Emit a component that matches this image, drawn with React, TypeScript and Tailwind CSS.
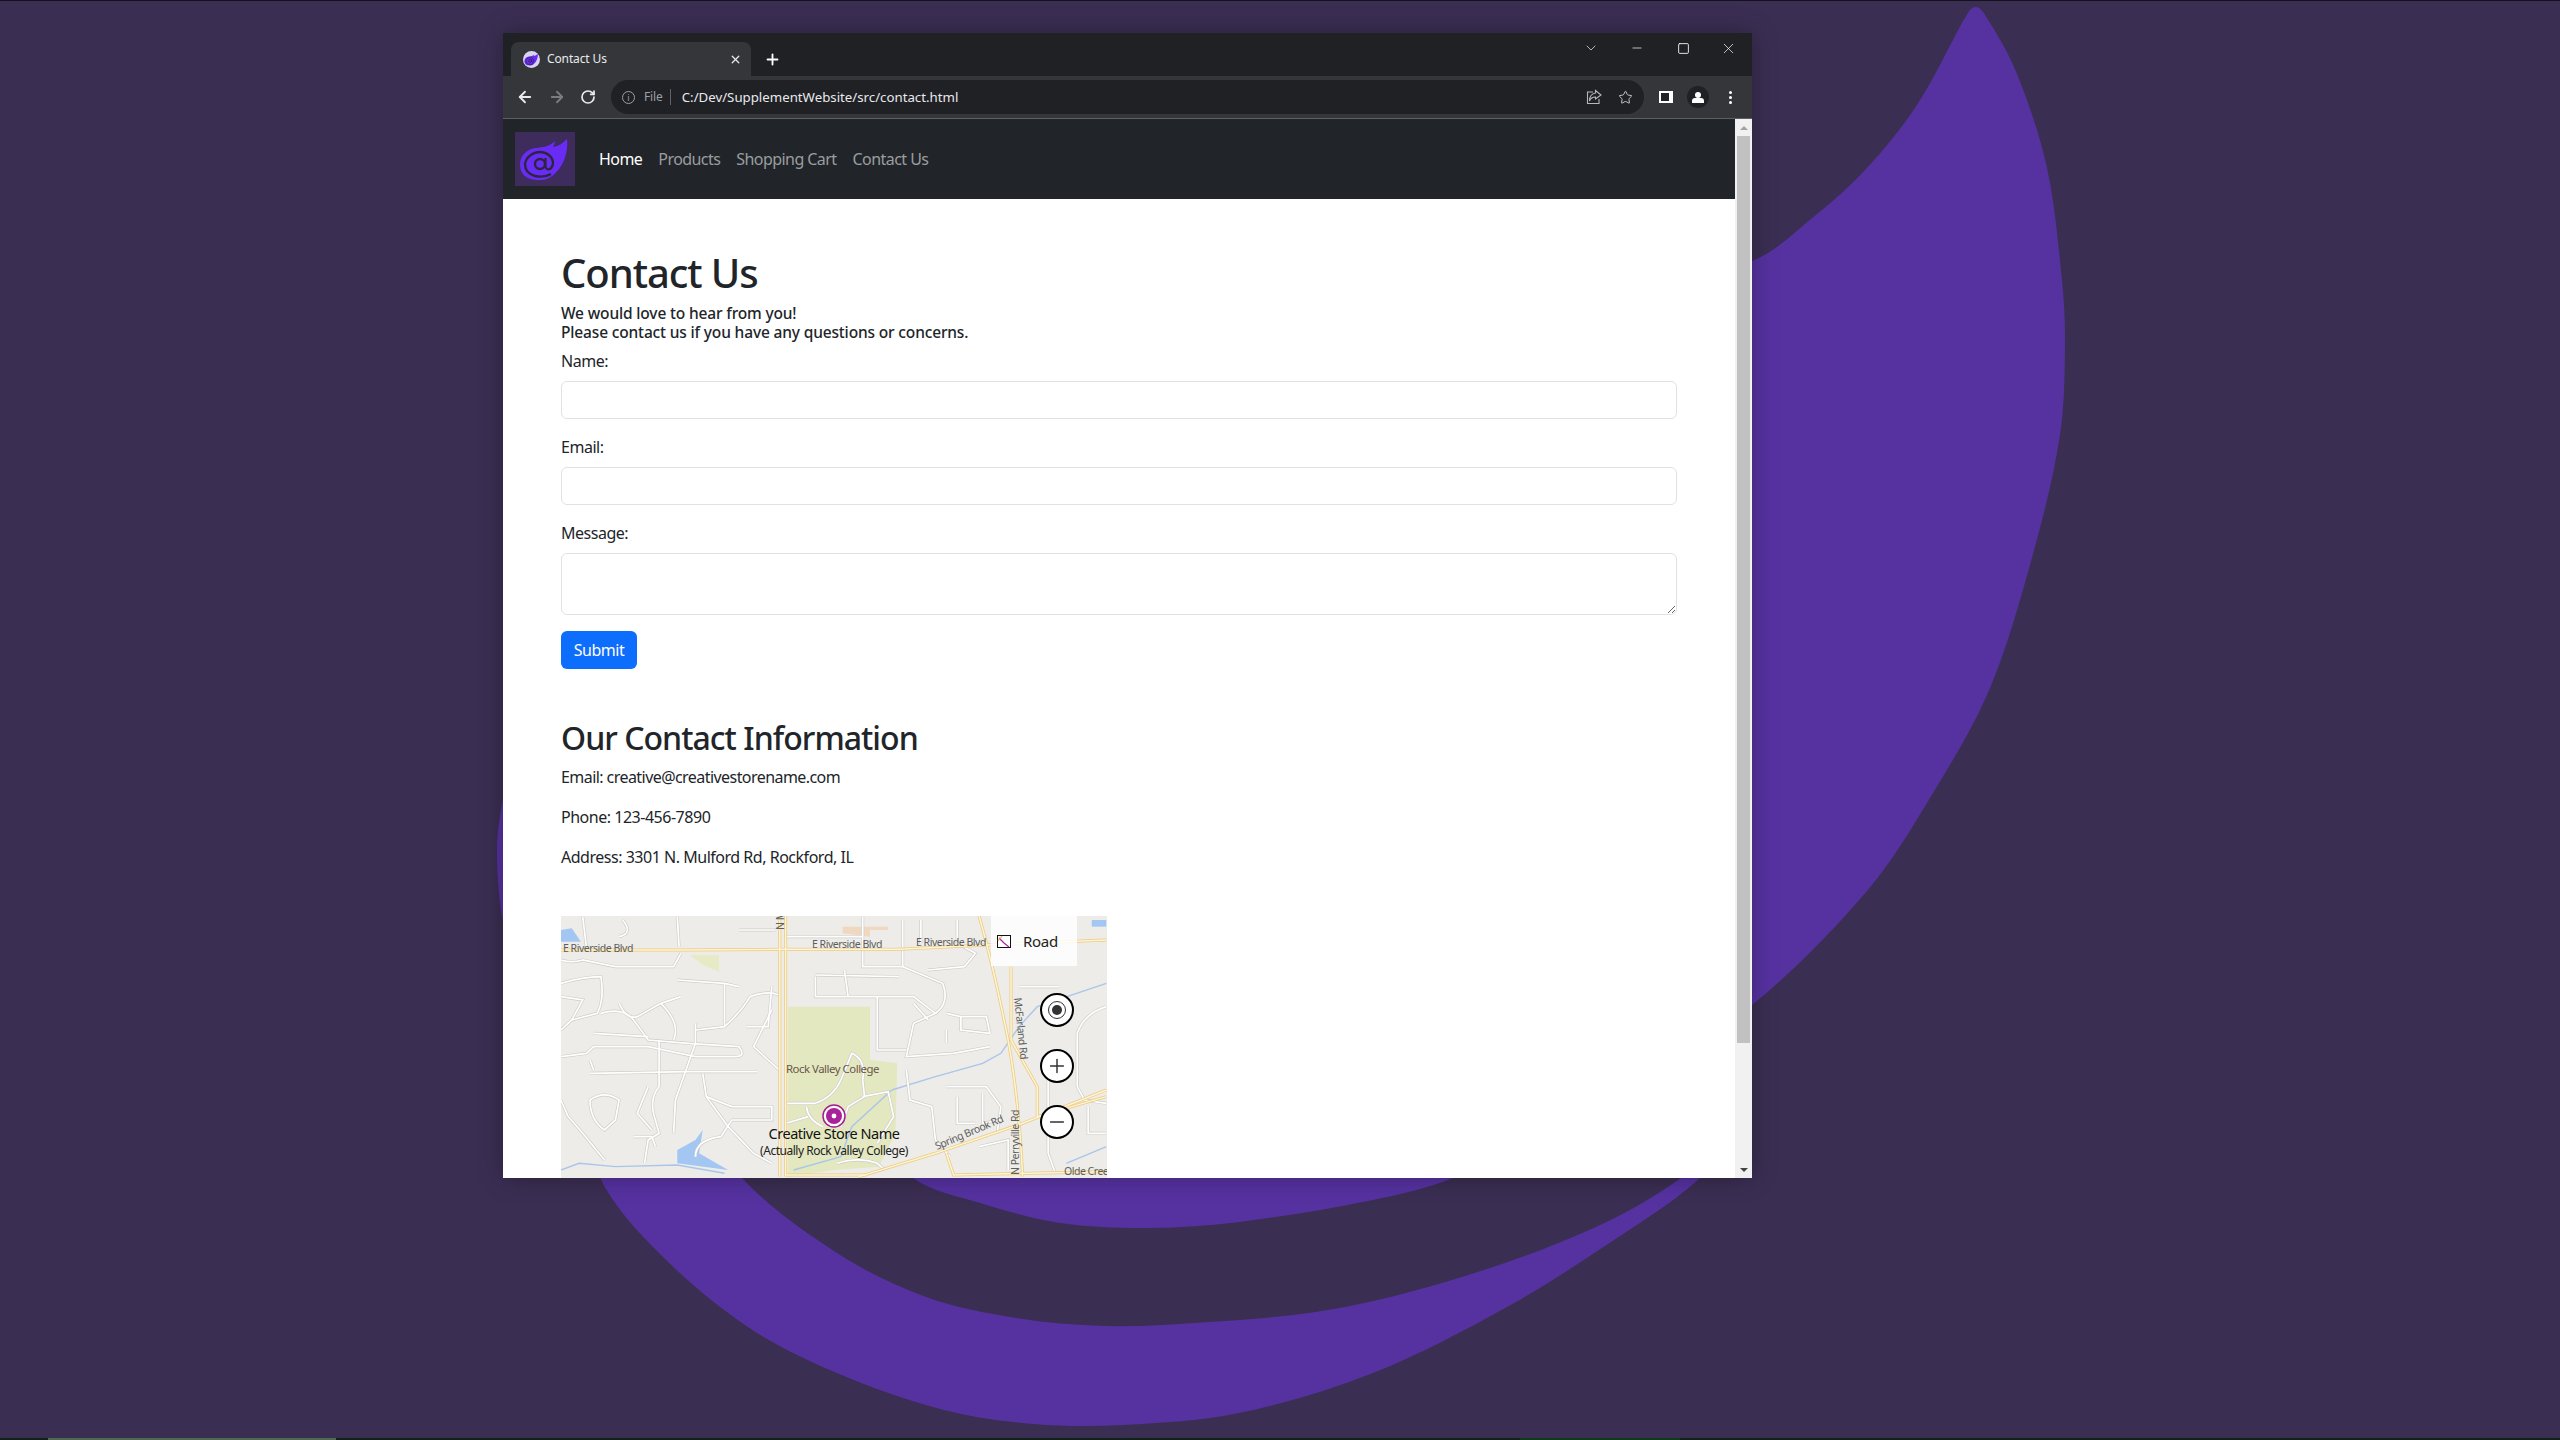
import React from 'react';
import { ArrowLeft, ArrowRight, ChevronDown, Minus, Plus, RotateCw, Square, Star, X } from 'lucide-react';

type Pt = [number, number];

// smooth curve through traced points, handles sized by segment so uneven spacing doesn't kink
const smooth = (pts: Pt[]) => {
  const unit = (a: Pt, b: Pt): Pt => {
    const len = Math.hypot(b[0] - a[0], b[1] - a[1]) || 1;
    return [(b[0] - a[0]) / len, (b[1] - a[1]) / len];
  };
  let d = `M${pts[0][0]} ${pts[0][1]}`;
  for (let i = 0; i < pts.length - 1; i++) {
    const p0 = pts[Math.max(i - 1, 0)];
    const p1 = pts[i];
    const p2 = pts[i + 1];
    const p3 = pts[Math.min(i + 2, pts.length - 1)];
    const t1 = unit(p0, p2);
    const t2 = unit(p1, p3);
    const h = Math.hypot(p2[0] - p1[0], p2[1] - p1[1]) / 3;
    d += `C${p1[0] + t1[0] * h} ${p1[1] + t1[1] * h} ${p2[0] - t2[0] * h} ${p2[1] - t2[1] * h} ${p2[0]} ${p2[1]}`;
  }
  return d;
};

const blob: Pt[] = [
  [1963, 21], [1975, 7], [1987, 18], [2017, 74], [2047, 168], [2062, 281], [2065, 344], [2060, 435],
  [2033, 554], [1990, 688], [1933, 793], [1867, 891], [1752, 1005], [1600, 1110], [1453, 1178],
  [1373, 1200], [1239, 1222], [1150, 1228], [1060, 1223], [980, 1203], [913, 1178], [850, 1110],
  [900, 600], [1400, 380], [1752, 261], [1817, 214], [1867, 168], [1917, 105], [1963, 21],
];

const crescent: Pt[] = [
  [510, 760], [497, 850], [510, 950], [600, 1178], [659, 1253], [748, 1327], [837, 1373], [944, 1410],
  [1034, 1424], [1123, 1425], [1239, 1413], [1373, 1373], [1507, 1307], [1614, 1240], [1700, 1178],
  [1745, 1120], [1681, 1178], [1596, 1227], [1462, 1277], [1328, 1310], [1194, 1323], [1105, 1326],
  [1016, 1318], [926, 1297], [837, 1253], [742, 1178], [600, 1000], [520, 850], [510, 760],
];

const Backdrop = () => (
  <svg className="absolute inset-0 h-full w-full" viewBox="0 0 2560 1440">
    <path d={smooth(blob)} fill="#5632a1" />
    <path d={smooth(crescent)} fill="#5632a1" />
  </svg>
);

const Logo = ({ className }: { className: string }) => (
  <svg className={className} viewBox="0 0 60 54">
    <path
      d="M5 33C5 23 12 17 21 16C28 15 34 15 40 9C40 11 39 13 38 15C44 14 48 11 52 7C53 16 51 26 46 34C41 42 34 48 26 48C13 49 5 43 5 33Z"
      fill="#6a2cf5"
    />
    <path d="M36 42C31 45 25 45 20 44C13 42 10 37 10 32C11 25 18 20 25 20C32 20 38 25 38 31C38 35 35 38 33 37" fill="none" stroke="#2c2540" strokeWidth="2.4" />
    <circle cx="25" cy="32" r="5" fill="none" stroke="#2c2540" strokeWidth="2.4" />
    <path d="M30.5 26V34C30.5 37 33 37.5 33.5 37" fill="none" stroke="#2c2540" strokeWidth="2.2" />
  </svg>
);

const TitleBar = () => (
  <div className="flex h-[43px] shrink-0 items-end bg-[#202124] pl-2">
    <div className="flex h-[34px] w-[240px] items-center rounded-t-lg bg-[#35363a] pl-3 pr-[9px]">
      <Logo className="h-[17px] w-[17px] rounded-full bg-[#d9d4f0]" />
      <span className="ml-[7px] flex-1 text-[12px] tracking-[-0.01em] text-[#e8eaed]">Contact Us</span>
      <X size={13} strokeWidth={2.4} className="text-[#e8eaed]" />
    </div>
    <div className="ml-[13px] flex h-[34px] items-center">
      <Plus size={17} strokeWidth={2.6} className="text-white" />
    </div>
    <div className="ml-auto flex h-[43px] items-start pt-[6px]">
      <div className="flex h-[18px] w-[46px] items-center justify-center">
        <ChevronDown size={16} strokeWidth={1} className="text-white" />
      </div>
      <div className="flex h-[18px] w-[46px] items-center justify-center">
        <Minus size={14} strokeWidth={1.2} className="text-white" />
      </div>
      <div className="flex h-[18px] w-[46px] items-center justify-center">
        <Square size={13} strokeWidth={1.6} className="text-white" />
      </div>
      <div className="flex h-[18px] w-[46px] items-center justify-center pr-[1px]">
        <X size={17} strokeWidth={1} className="text-white" />
      </div>
    </div>
  </div>
);

const Toolbar = () => (
  <div className="flex h-[43px] shrink-0 items-center border-b border-[#5f6063] bg-[#35363a]">
    <div className="ml-[13px] flex w-[95px] items-center gap-[14px] text-[#e8eaed]">
      <ArrowLeft size={18} strokeWidth={2.4} />
      <ArrowRight size={18} strokeWidth={2.4} className="text-[#7b7c7f]" />
      <RotateCw size={16} strokeWidth={2.6} />
    </div>
    <div className="flex h-[34px] w-[1033px] items-center rounded-full bg-[#202124] pl-[11px] pr-[10px]">
      <span className="flex h-[13px] w-[13px] items-center justify-center rounded-full border border-[#9aa0a6] text-[9px] leading-none text-[#9aa0a6]">
        i
      </span>
      <span className="ml-[9px] text-[12px] tracking-[-0.01em] text-[#9aa0a6]">File</span>
      <span className="ml-[7px] h-[16px] w-px bg-[#5f6368]" />
      <span className="ml-[11px] flex-1 pt-px text-[13.25px] text-[#e8eaed]">C:/Dev/SupplementWebsite/src/contact.html</span>
      <svg className="h-[16px] w-[16px] text-[#b5b7b9]" viewBox="0 0 16 16" fill="none" stroke="currentColor" strokeWidth="1.1">
        <path d="M7 3H1.5V14.5H13V10" />
        <path d="M9.5 1.5L15 6L9.5 10V8C6.5 8 4.5 9.5 3.5 12C3.5 8 5.5 4.7 9.5 4Z" />
      </svg>
      <Star size={15} strokeWidth={1.6} className="ml-[16px] mr-[1px] text-[#c4c6c8]" />
    </div>
    <div className="ml-[15px] flex h-[12px] w-[14px] items-center justify-end border-[2px] border-white bg-[#202124]">
      <span className="h-full w-[2px] bg-white" />
    </div>
    <div className="ml-[14px] flex h-[22px] w-[22px] flex-col items-center justify-center rounded-full bg-[#202124]">
      <span className="h-[6px] w-[6px] rounded-full bg-white" />
      <span className="h-[5px] w-[12px] rounded-t-[3px] bg-white" />
    </div>
    <div className="ml-[20px] flex flex-col gap-[2px]">
      <span className="h-[3px] w-[3px] rounded-full bg-white" />
      <span className="h-[3px] w-[3px] rounded-full bg-white" />
      <span className="h-[3px] w-[3px] rounded-full bg-white" />
    </div>
  </div>
);

const SiteNav = () => (
  <nav className="flex h-[80px] shrink-0 items-center bg-[#212529] pl-3 text-[16px] tracking-[-0.035em] text-[#9a9da0]">
    <div className="flex h-[54px] w-[60px] items-center justify-center bg-[#3e2c5c]">
      <Logo className="h-[54px] w-[60px]" />
    </div>
    <a className="ml-6 text-white">Home</a>
    <a className="ml-4">Products</a>
    <a className="ml-4">Shopping Cart</a>
    <a className="ml-4">Contact Us</a>
  </nav>
);

const minorRoads = [
  'M30 180Q60 190 90 180L180 200L340 200L360 160',
  'M350 240L480 250L520 260',
  'M30 250Q90 230 140 230Q150 300 130 340L60 360',
  'M140 340Q200 320 230 360L270 420L380 430L520 440Q540 470 510 470L400 470L270 440L120 440L100 460L30 470',
  'M120 400L270 410',
  'M110 520L380 515L570 515',
  'M110 480L120 510',
  'M300 420L300 560Q270 600 290 660L300 700L270 720L260 790',
  'M305 310Q360 370 340 420',
  'M400 370L400 430L345 600L340 700',
  'M480 250L480 380L400 390',
  'M190 310Q210 360 240 350L305 310L360 290',
  'M350 50L355 140',
  'M550 290Q600 270 630 285',
  'M550 290Q530 330 480 380',
  'M610 260L600 380L540 380',
  'M420 520L430 590L490 680L560 760L610 790',
  'M430 590L500 620L610 620L610 660L500 660',
  'M560 440L630 510',
  'M560 440L610 330',
  'M110 600Q150 570 190 600L180 660L150 690Q110 660 110 600',
  'M30 600L50 650L90 700L150 780',
  'M230 710L280 710L290 740',
  'M400 770Q400 720 470 710L500 660',
  'M30 290L90 300L60 360L30 390',
  'M200 60Q230 100 190 110',
  'M90 50L100 140',
  'M270 560L240 640L280 690',
  'M520 90L620 90',
  'M650 110L860 110',
  'M860 50L860 200L970 200L1080 250Q1100 310 1060 340',
  'M730 230L730 290L1000 290L1060 340L1000 370L980 470L1110 460L1210 440',
  'M730 225L960 230',
  'M810 210L820 290',
  'M900 290L900 450L980 450',
  'M970 60L970 200',
  'M1020 60L1020 130',
  'M1120 60L1120 130L1170 160L1140 200L1040 210',
  'M1090 340L1130 350L1130 390L1210 400',
  'M1130 350L1200 350L1210 400',
  'M1000 310L1040 360',
  'M1090 390L1090 430',
  'M980 510L990 600L1050 620L1060 720L1100 770',
  'M1090 560L1200 560L1240 620L1230 700',
  'M1190 580L1190 670L1240 660',
  'M1120 590L1120 670L1170 670',
  'M1180 740L1260 720L1260 810',
  'M1370 540L1370 760L1390 820',
  'M1290 260L1400 260',
  'M1530 320Q1470 340 1450 400L1450 560L1470 600L1530 610',
  'M1480 620L1480 700L1530 700',
  'M650 610L730 610Q780 590 800 540L830 460Q870 480 860 540L865 590L820 620L800 680',
  'M705 620Q710 660 750 680',
  'M860 590L930 575L945 650L900 730',
  'M650 670L710 650',
  'M790 790Q850 770 900 790L920 810',
];

const majorRoads = [
  'M632 48L632 830',
  'M648 48L648 830',
  'M30 150L360 150L640 148L960 148L1200 135L1530 120',
  'M1180 48Q1220 200 1260 420Q1290 600 1300 830',
  'M1268 200L1268 420L1340 560L1340 650',
  'M850 830L1060 760L1300 670L1530 570',
  'M1340 650L1530 590',
  'M650 825L870 825',
  'M1090 760L1110 825L1530 815',
];

const creeks = [
  'M940 570L1060 530L1190 490L1240 460L1290 380L1340 320L1530 250',
  'M940 570L830 680L800 770L670 810',
  'M30 810L80 790L180 800L350 795L480 820',
  'M1420 790L1530 740',
];

const labelCls = 'fill-[#5d5d5d] text-[10.5px]';

const MapView = () => (
  <div className="relative mt-[47px] h-[262px] w-[546px] overflow-hidden bg-[#edece8]">
    <svg className="h-full w-full" viewBox="0 0 546 262" style={{ fontFamily: '"Noto Sans", sans-serif' }}>
      {/* traced from the 2.75x / 3x crop, so the group undoes that scale */}
      <g transform="translate(-11 -16) scale(0.3636 0.3333)">
        <path d="M655 320L880 320L880 480L955 490L950 700L905 800L780 810L655 830Z" fill="#e3e8c0" />
        <path d="M385 165L465 165L465 215L420 195Z" fill="#e6ebc6" />
        <path d="M350 750L400 720L420 690L410 760L490 810L350 790Z" fill="#a3c7f2" />
        <path d="M30 90L60 85L85 125L30 125Z" fill="#a3c7f2" />
        <path d="M1490 60L1530 60L1530 80L1490 80Z" fill="#a3c7f2" />
        <path d="M805 80L930 80L930 90L880 90L880 110L805 100Z" fill="#f0d8c0" />
        {creeks.map((d) => (
          <path key={d} d={d} fill="none" stroke="#a9c6ea" strokeWidth="1.4" vectorEffect="non-scaling-stroke" />
        ))}
        {minorRoads.map((d) => (
          <path key={d} d={d} fill="none" stroke="#cdccc8" strokeWidth="3" vectorEffect="non-scaling-stroke" />
        ))}
        {minorRoads.map((d) => (
          <path key={d} d={d} fill="none" stroke="#ffffff" strokeWidth="1.7" vectorEffect="non-scaling-stroke" />
        ))}
        {majorRoads.map((d) => (
          <path key={d} d={d} fill="none" stroke="#ecca7f" strokeWidth="3" vectorEffect="non-scaling-stroke" />
        ))}
        {majorRoads.map((d) => (
          <path key={d} d={d} fill="none" stroke="#fdf5d6" strokeWidth="1.5" vectorEffect="non-scaling-stroke" />
        ))}
      </g>
      <text x="2" y="36" className={labelCls}>E Riverside Blvd</text>
      <text x="251" y="32" className={labelCls}>E Riverside Blvd</text>
      <text x="355" y="30" className={labelCls}>E Riverside Blvd</text>
      <text x="225" y="157" className="fill-[#6b554c] text-[11.4px]">Rock Valley College</text>
      <text x="503" y="259" className={labelCls}>Olde Creek</text>
      <text transform="translate(453 82) rotate(84)" className={labelCls}>McFarland Rd</text>
      <text transform="translate(458 259) rotate(-90)" className={labelCls}>N Perryville Rd</text>
      <text transform="translate(376 234) rotate(-23)" className={labelCls}>Spring Brook Rd</text>
      <text transform="translate(223 14) rotate(-90)" className={labelCls}>N M</text>
      <circle cx="273" cy="200" r="11" fill="#fff" stroke="#a0208f" strokeWidth="1.5" />
      <circle cx="273" cy="200" r="8" fill="#a8229a" />
      <circle cx="273" cy="200" r="2.4" fill="#fff" />
      <text x="273" y="223" textAnchor="middle" className="fill-[#111] text-[14.5px]">Creative Store Name</text>
      <text x="273" y="239" textAnchor="middle" className="fill-[#222] text-[12px]">(Actually Rock Valley College)</text>
    </svg>
    <div className="absolute right-[30px] top-0 flex h-[50px] w-[86px] items-center bg-white/85 pl-[6px]">
      <svg className="h-[13px] w-[14px]" viewBox="0 0 14 13">
        <rect x="0.5" y="0.5" width="13" height="12" fill="#fff" stroke="#111" />
        <path d="M2 3L7 8L12 12" fill="none" stroke="#a8229a" strokeWidth="1.2" />
        <path d="M1 6L5 1" fill="none" stroke="#e6b04a" strokeWidth="1.2" />
      </svg>
      <span className="ml-[12px] text-[15px] tracking-[-0.02em] text-[#222]">Road</span>
    </div>
    <div className="absolute left-[479px] top-[77px] flex flex-col gap-[22px]">
      <div className="flex h-[34px] w-[34px] items-center justify-center rounded-full border-2 border-black bg-white">
        <span className="flex h-[18px] w-[18px] items-center justify-center rounded-full border-[1.5px] border-[#333]">
          <span className="h-[10px] w-[10px] rounded-full bg-[#333]" />
        </span>
      </div>
      <div className="flex h-[34px] w-[34px] items-center justify-center rounded-full border-2 border-black bg-white">
        <Plus size={22} strokeWidth={1.6} className="text-[#333]" />
      </div>
      <div className="flex h-[34px] w-[34px] items-center justify-center rounded-full border-2 border-black bg-white">
        <Minus size={22} strokeWidth={1.6} className="text-[#333]" />
      </div>
    </div>
  </div>
);

const fieldCls = 'block w-full rounded-md border border-[#dee2e6] bg-white';
const labelTextCls = 'block h-[24px] leading-[24px] mb-2';

const ContactPage = () => (
  <div className="min-w-0 flex-1 overflow-hidden bg-white">
    <SiteNav />
    <main className="px-[58px] pt-[50px] text-[16px] tracking-[-0.03em] text-[#212529]">
      <h1 className="mb-[7px] text-[40px] font-medium leading-[48px] tracking-[-0.027em]">Contact Us</h1>
      <p className="mb-[7px] text-[15.5px] font-medium leading-[19px] tracking-[-0.01em] text-[#212529]">
        We would love to hear from you!
        <br />
        Please contact us if you have any questions or concerns.
      </p>
      <form>
        <div className="mb-4">
          <label className={labelTextCls}>Name:</label>
          <input className={`${fieldCls} h-[38px]`} />
        </div>
        <div className="mb-4">
          <label className={labelTextCls}>Email:</label>
          <input className={`${fieldCls} h-[38px]`} />
        </div>
        <div className="mb-4">
          <label className={labelTextCls}>Message:</label>
          <textarea className={`${fieldCls} h-[62px]`} />
        </div>
        <button type="button" className="flex h-[38px] w-[76px] items-center justify-center rounded-md bg-[#0d6efd] text-white">
          Submit
        </button>
      </form>
      <h2 className="mb-2 mt-[50px] text-[32px] font-medium leading-[38px] tracking-[-0.03em]">Our Contact Information</h2>
      <p className="mb-4 leading-[24px] tracking-[-0.035em]">Email: creative@creativestorename.com</p>
      <p className="mb-4 leading-[24px]">Phone: 123-456-7890</p>
      <p className="mb-4 leading-[24px]">Address: 3301 N. Mulford Rd, Rockford, IL</p>
      <MapView />
    </main>
  </div>
);

const Scrollbar = () => (
  <div className="flex w-[17px] shrink-0 flex-col items-center bg-[#f1f1f1]">
    <div className="flex h-[17px] items-center justify-center">
      <span className="h-0 w-0 border-x-[4px] border-b-[4px] border-x-transparent border-b-[#a3a3a3]" />
    </div>
    <div className="h-[907px] w-[13px] bg-[#c1c1c1]" />
    <div className="mt-auto flex h-[17px] items-center justify-center">
      <span className="h-0 w-0 border-x-[4px] border-t-[4px] border-x-transparent border-t-[#444]" />
    </div>
  </div>
);

export default function App() {
  return (
    <div
      className="relative h-[1440px] w-[2560px] overflow-hidden bg-[#3b2e53]"
      style={{ fontFamily: '"Noto Sans", "Open Sans", sans-serif' }}
    >
      <Backdrop />
      <div className="absolute inset-x-0 top-0 h-px bg-[#14121c]" />
      <div className="absolute inset-x-0 bottom-0 flex h-[2px] bg-[#10211a]">
        <div className="ml-[48px] w-[288px] bg-[#506a52]" />
        <div className="ml-[1184px] w-[160px] bg-[#123a1a]" />
      </div>
      <div className="absolute left-[503px] top-[33px] flex h-[1145px] w-[1249px] flex-col shadow-[0_0_24px_rgba(0,0,0,0.3)]">
        <TitleBar />
        <Toolbar />
        <div className="flex min-h-0 flex-1">
          <ContactPage />
          <Scrollbar />
        </div>
      </div>
    </div>
  );
}
